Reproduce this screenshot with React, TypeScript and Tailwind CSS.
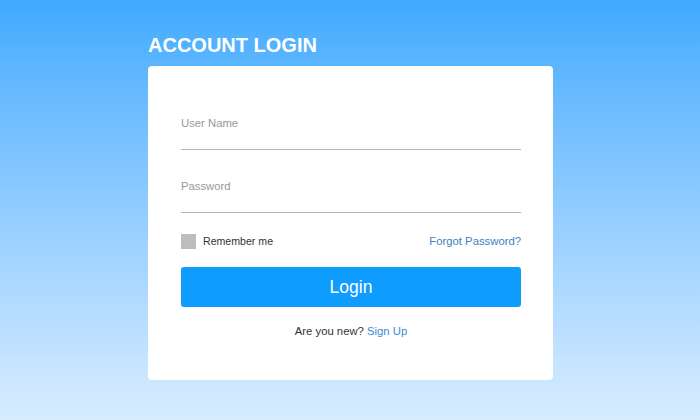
export default function App() {
  return (
    <div className="min-h-[420px] w-full bg-gradient-to-b from-[#3eaafe] to-[#d8edfe] pl-[1px] pt-[33px] font-['Liberation_Sans',Arial,sans-serif]">
      <div className="mx-auto w-[405px]">
        <h1 className="mb-[9px] text-[20px] font-bold leading-[24px] text-white">ACCOUNT LOGIN</h1>
        <div className="h-[314px] rounded-[4px] bg-white pl-[33px] pr-[32px] pt-[49px]">
          <div className="border-b border-[#b5b5b5] pb-[18px] text-[11.3px] leading-[16px] text-[#999]">
            User Name
          </div>
          <div className="mt-[28px] border-b border-[#b5b5b5] pb-[18px] text-[11.3px] leading-[16px] text-[#999]">
            Password
          </div>
          <div className="mt-[21px] flex h-[15px] items-center justify-between">
            <label className="flex items-center gap-[7px] text-[10.6px] text-[#333]">
              <span className="h-[15px] w-[15px] bg-[#bdbdbd]" />
              Remember me
            </label>
            <a className="text-[11.3px] text-[#3c7fc2]">Forgot Password?</a>
          </div>
          <button className="mt-[18px] flex h-[40px] w-full items-center justify-center rounded-[3px] bg-[#0e9cff] text-[17.5px] text-white">
            Login
          </button>
          <p className="mt-[16px] text-center text-[11.3px] leading-[16px] text-[#333]">
            Are you new? <a className="text-[#3b8ad6]">Sign Up</a>
          </p>
        </div>
      </div>
    </div>
  );
}
